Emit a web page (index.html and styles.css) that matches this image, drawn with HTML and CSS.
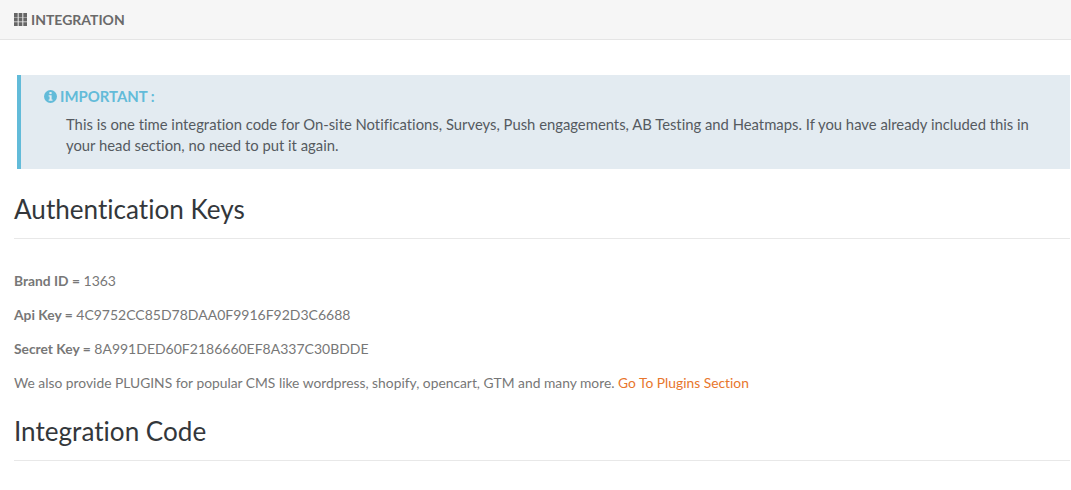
FILE: index.html
```html
<!DOCTYPE html>
<html>
<head>
<meta charset="utf-8">
<title>Integration</title>
<link rel="stylesheet" href="styles.css">
</head>
<body>
<header class="topbar">
  <svg class="th-icon" width="13" height="13" viewBox="0 0 13 13"><g fill="#666"><rect x="0" y="0" width="3.7" height="4.2"/><rect x="4.65" y="0" width="3.7" height="4.2"/><rect x="9.3" y="0" width="3.7" height="4.2"/><rect x="0" y="4.5" width="3.7" height="4"/><rect x="4.65" y="4.5" width="3.7" height="4"/><rect x="9.3" y="4.5" width="3.7" height="4"/><rect x="0" y="9.2" width="3.7" height="3.8"/><rect x="4.65" y="9.2" width="3.7" height="3.8"/><rect x="9.3" y="9.2" width="3.7" height="3.8"/></g></svg>
  <span class="topbar-title">INTEGRATION</span>
</header>
<main class="content">
  <section class="notice">
    <div class="notice-title">
      <svg width="13" height="13" viewBox="0 0 14 14"><circle cx="7" cy="7" r="7" fill="#62bbd9"/><rect x="5.8" y="2.2" width="2.4" height="2.2" fill="#e3ebf1"/><path d="M5 5.6h3.2v4.6H9.2v1.4H5v-1.4h1V7H5z" fill="#e3ebf1"/></svg>
      <span>IMPORTANT :</span>
    </div>
    <p class="notice-text">This is one time integration code for On-site Notifications, Surveys, Push engagements, AB Testing and Heatmaps. If you have already included this in your head section, no need to put it again.</p>
  </section>
  <h2 class="section-heading first">Authentication Keys</h2>
  <div class="keys">
    <p class="key-line"><b>Brand ID =</b> 1363</p>
    <p class="key-line"><b>Api Key =</b> 4C9752CC85D78DAA0F9916F92D3C6688</p>
    <p class="key-line"><b>Secret Key =</b> 8A991DED60F2186660EF8A337C30BDDE</p>
    <p class="plugins-line">We also provide PLUGINS for popular CMS like wordpress, shopify, opencart, GTM and many more. <a href="#">Go To Plugins Section</a></p>
  </div>
  <h2 class="section-heading second">Integration Code</h2>
</main>
</body>
</html>
```
FILE: styles.css
```css
* { box-sizing: border-box; }
html, body { margin: 0; padding: 0; }
body { background: #fff; font-family: Lato, sans-serif; font-size: 14px; color: #777; overflow: hidden; font-variant-ligatures: none; }
.topbar { height: 40px; background: #f6f6f6; border-bottom: 1px solid #e5e5e5; display: flex; align-items: center; gap: 4px; padding-left: 14px; }
.topbar-title { font-weight: 700; font-size: 14px; color: #6a6a6a; }
.content { padding: 35px 1px 0 14px; }
.notice { margin-left: 3px; height: 94px; background: #e3ebf1; border-left: 4px solid #62bbd9; padding: 11px 24px 0 23px; }
.notice-title { display: flex; align-items: center; gap: 3px; color: #62bbd9; font-size: 14.9px; font-weight: 700; line-height: 20px; }
.notice-text { margin: 8px 0 0 22px; color: #555a60; font-size: 14.82px; line-height: 21px; }
.section-heading { margin: 0; font-weight: 400; font-size: 26.1px; line-height: 32px; color: #33373b; padding: 24px 0 13px; border-bottom: 1px solid #e8e8e8; height: 70px; }
.section-heading.first { margin-bottom: 32px; }
.section-heading.second { padding-top: 22px; height: 68px; }
.keys p { margin: 0 0 14px; line-height: 20px; }
.keys b { font-size: 13.8px; }
.keys .plugins-line { margin-bottom: 0; font-size: 13.82px; }
.keys a { color: #e8762c; text-decoration: none; }
```
